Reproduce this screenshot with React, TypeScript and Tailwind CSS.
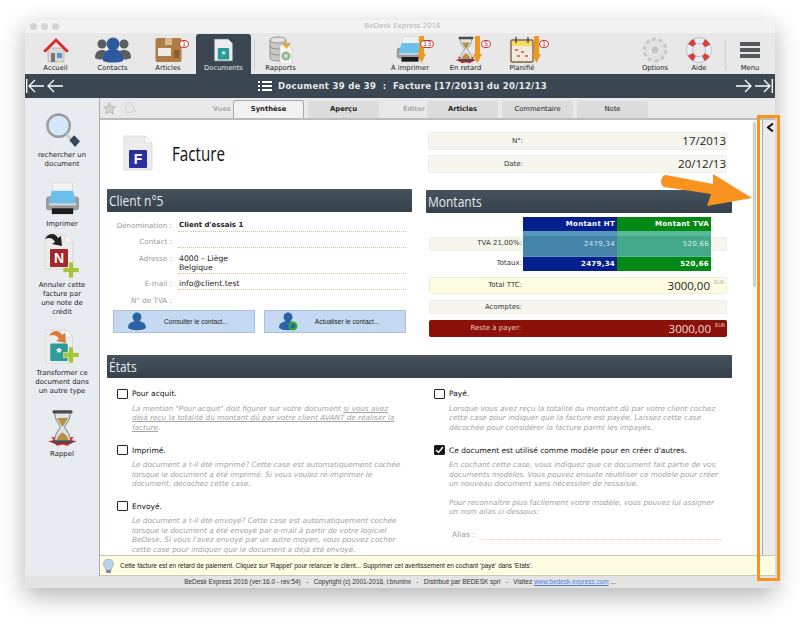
import React, { FC, ReactNode } from "react";

// --- small drawn icons ---

const Home = () => (
  <svg width="28" height="28" viewBox="0 0 28 28">
    <rect x="6" y="12" width="16" height="14" fill="#d8d8d4" stroke="#999" strokeWidth=".5" />
    <rect x="9" y="17" width="4" height="9" fill="#777" />
    <rect x="15" y="17" width="5" height="5" fill="#5b8fc7" />
    <path d="M1 15 14 2l13 13-2.500 1.500L14 6 3.500 16.500z" fill="#d92b2b" />
  </svg>
);

const Contacts = () => (
  <svg width="36" height="26" viewBox="0 0 36 26">
    <g fill="#5a5d62">
      <circle cx="7" cy="7" r="4.500" />
      <path d="M0 21c0-6 3-8 7-8s7 2 7 8c-4 2-10 2-14 0z" />
      <circle cx="29" cy="7" r="4.500" />
      <path d="M22 21c0-6 3-8 7-8s7 2 7 8c-4 2-10 2-14 0z" />
    </g>
    <g fill="#2d5a9e">
      <circle cx="18" cy="7" r="6.500" />
      <path d="M8 24c0-9 4-12 10-12s10 3 10 12c-5 2-15 2-20 0z" />
    </g>
  </svg>
);

const Box = () => (
  <svg width="27" height="26" viewBox="0 0 27 26">
    <rect x=".5" y="1" width="26" height="24" rx="2" fill="#b07c45" />
    <rect x="10" y="1" width="7" height="7" fill="#dcb98c" />
    <rect x="3" y="11" width="13" height="8" fill="#ecebe6" />
    <rect x="19" y="13" width="5" height="8" fill="#8a5f30" />
  </svg>
);

const Badge: FC<{ n: number; className: string }> = ({ n, className }) => (
  <span className={`absolute flex h-[8px] items-center justify-center rounded-[4px] border border-[#c33] bg-white px-[2px] text-[6.500px] leading-none text-[#b22] ${className}`}>
    {n}
  </span>
);

const DocSheet: FC<{ w: number; h: number; fill: string; letter: string }> = ({ w, h, fill, letter }) => (
  <svg width={w} height={h} viewBox="0 0 30 36">
    <path d="M1 1h21l7 7v27H1z" fill="#ececec" stroke="#cfcfcf" strokeWidth=".6" />
    <path d="M22 1v7h7z" fill="#fff" stroke="#c8c8c8" strokeWidth=".5" />
    <rect x="6" y="15" width="18" height="18" rx="1" fill={fill} />
    <text x="15" y="29" textAnchor="middle" fontSize="14" fill="#fff" fontFamily="Liberation Sans" fontWeight="700">{letter}</text>
  </svg>
);

const Database = () => (
  <svg width="24" height="28" viewBox="0 0 24 28">
    <g fill="#c9c9c5" stroke="#77787a" strokeWidth=".7">
      <path d="M1 4v18c0 4 16 4 16 0V4z" />
      <ellipse cx="9" cy="4" rx="8" ry="3" fill="#e4e4e2" />
      <path d="M1 10c0 4 16 4 16 0M1 16c0 4 16 4 16 0" fill="none" />
    </g>
    <path d="M11 9h8l4 4v15H11z" fill="#f5f5f2" stroke="#bbb" strokeWidth=".5" />
    <path d="M13 7h9l-4.500 6z" fill="#eba43c" />
    <circle cx="17" cy="20" r="4.500" fill="#8dbb8c" />
    <circle cx="17" cy="20" r="2" fill="#cfe0ce" />
  </svg>
);

const Printer: FC<{ w?: number }> = ({ w = 35 }) => (
  <svg width={w} height={w} viewBox="0 0 36 36">
    <rect x="8" y="1" width="20" height="14" fill="#f2f2f2" stroke="#ccc" strokeWidth=".5" />
    <rect x="1" y="15" width="34" height="14" rx="3" fill="#9a9c9f" />
    <path d="M7 9h22l3 13H4z" fill="#6cc0ec" />
    <path d="M4 22h28v2H4z" fill="#d8dadc" />
    <rect x="7" y="27" width="22" height="6" fill="#1d1d1f" />
  </svg>
);

const Hourglass: FC<{ w?: number; h?: number }> = ({ w = 28, h = 30 }) => (
  <svg width={w} height={h} viewBox="0 0 28 34">
    <path d="M1 29l5-1-2-3 5 1 5-2 5 2 5-1-2 3 5 1-6 2-2 2-5-1-5 1-2-2z" fill="#e81515" />
    <path d="M7 3h14c0 9-5 10-5 13 0 3 5 4 5 13H7c0-9 5-10 5-13 0-3-5-4-5-13z" fill="#dfe4e6" stroke="#8c9093" />
    <path d="M9 8h10l-5 8zM8.500 28c1-4 3.500-6 5.500-7 2 1 4.500 3 5.500 7z" fill="#b98e45" />
    <rect x="5" y="1" width="18" height="3" rx="1" fill="#4a4d50" />
    <rect x="5" y="28" width="18" height="3" rx="1" fill="#4a4d50" />
  </svg>
);

const DownArrow: FC<{ className: string }> = ({ className }) => (
  <svg className={`absolute ${className}`} width="9" height="27" viewBox="0 0 9 27">
    <path d="M2 0h5v18h2l-4.500 9L0 18h2z" fill="#ec9a21" />
  </svg>
);

const Calendar = () => (
  <svg width="24" height="26" viewBox="0 0 24 26">
    <rect x="1" y="3" width="22" height="22" rx="1" fill="#f1ebdc" stroke="#86604a" strokeWidth="1.400" />
    <rect x="2" y="4" width="20" height="5" fill="#f4dc5e" />
    <path d="M6 0v6M18 0v6" stroke="#333" strokeWidth="1.200" />
    <path d="M5 12h3v2H5zM11 14h3v2h-3zM7 18h3v2H7zM15 18h3v2h-3z" fill="#d77" />
  </svg>
);

const Gear = () => (
  <svg width="26" height="26" viewBox="0 0 26 26">
    <circle cx="13" cy="13" r="8.500" fill="none" stroke="#e2e2e2" strokeWidth="5" />
    <circle cx="13" cy="13" r="11" fill="none" stroke="#c8c8c8" strokeWidth="3" strokeDasharray="4 2.900" />
    <circle cx="13" cy="13" r="3.500" fill="#c4c4c4" />
  </svg>
);

const Buoy = () => (
  <svg width="26" height="26" viewBox="0 0 26 26">
    <circle cx="13" cy="13" r="9.500" fill="none" stroke="#9aa8b8" strokeWidth="6.200" />
    <circle cx="13" cy="13" r="9.500" fill="none" stroke="#e6eef8" strokeWidth="5.200" />
    <circle cx="13" cy="13" r="9.500" fill="none" stroke="#d8403a" strokeWidth="5.500" strokeDasharray="6 8.920" strokeDashoffset="3" transform="rotate(45 13 13)" />
  </svg>
);

const Menu = () => (
  <svg width="20" height="18" viewBox="0 0 20 18">
    <path d="M0 1h20v4H0zM0 7h20v4H0zM0 13h20v4H0z" fill="#55585c" />
  </svg>
);

const Magnifier = () => (
  <svg width="35" height="35" viewBox="0 0 36 36">
    <circle cx="14" cy="13" r="11.500" fill="#d3e9fa" stroke="#9a9c9f" strokeWidth="2.500" />
    <path d="M22 22l4 4" stroke="#ccc" strokeWidth="3" />
    <path d="M25 28l5-5 6 6-5 6z" fill="#37485e" />
  </svg>
);

const Plus: FC<{ className: string }> = ({ className }) => (
  <svg className={`absolute ${className}`} width="16" height="16" viewBox="0 0 16 16">
    <path d="M5.500 0h5v5.500H16v5h-5.500V16h-5v-5.500H0v-5h5.500z" fill="#a6c43d" stroke="#fff" strokeWidth=".5" />
  </svg>
);

const CurvedArrow: FC<{ color: string; className: string }> = ({ color, className }) => (
  <svg className={`absolute ${className}`} width="19" height="15" viewBox="0 0 19 15">
    <path d="M1 7C4 1 11 0 14 6l3-2 1 10-10-2 3-2C9 6 5 5 1 7z" fill={color} />
  </svg>
);

const Person: FC<{ refresh?: boolean }> = ({ refresh }) => (
  <svg width="20" height="19" viewBox="0 0 20 19">
    <circle cx="9" cy="5" r="4.500" fill="#2b62a3" />
    <path d="M0 16c0-5 4-7 9-7s9 2 9 7c-4 3-14 3-18 0z" fill="#2b62a3" />
    {refresh && <circle cx="14" cy="14" r="3.500" fill="none" stroke="#2fb02f" strokeWidth="2" />}
  </svg>
);

const Check: FC<{ checked?: boolean }> = ({ checked }) => (
  <span className={`flex h-[10px] w-[11px] shrink-0 items-center justify-center rounded-[1px] border border-[#222] ${checked ? "bg-[#111]" : "bg-white"}`}>
    {checked && (
      <svg width="9" height="8" viewBox="0 0 9 8">
        <path d="M1 4l2.500 2.500L8 1" fill="none" stroke="#fff" strokeWidth="1.400" />
      </svg>
    )}
  </span>
);

const ThinArrow: FC<{ dir: "left" | "right"; bar?: boolean }> = ({ dir, bar }) => (
  <svg width="18" height="14" viewBox="0 0 18 14" className={dir === "right" ? "-scale-x-100" : ""}>
    {bar && <path d="M.7 0v14" stroke="#fff" strokeWidth="1.400" />}
    <path d={`M${bar ? 3 : 1} 7h15M${bar ? 9 : 7} 1 ${bar ? 3 : 1} 7l6 6`} fill="none" stroke="#fff" strokeWidth="1.300" />
  </svg>
);

// --- toolbar ---

const ToolItem: FC<{ label: string; className: string; children: ReactNode; active?: boolean }> = ({ label, className, children, active }) => (
  <div className={`relative flex shrink-0 flex-col items-center justify-end ${className} ${active ? "h-[40px] rounded-t-[3px] bg-[#3a4652] text-[#e6e8ea]" : "h-[41px] text-[#222]"}`}>
    <div className="flex h-[29px] items-center justify-center">{children}</div>
    <span className="mb-[1px] whitespace-nowrap text-[6.800px] leading-[9px]">{label}</span>
  </div>
);

const Toolbar = () => (
  <div className="flex h-[41px] items-end bg-[#e8e8e8] pl-[2px]">
    <ToolItem label="Accueil" className="w-[57px]"><Home /></ToolItem>
    <ToolItem label="Contacts" className="w-[57px]"><Contacts /></ToolItem>
    <ToolItem label="Articles" className="w-[54px]">
      <Box />
      <Badge n={1} className="left-[38px] top-[7px]" />
    </ToolItem>
    <ToolItem label="Documents" className="ml-[1px] w-[55px]" active>
      <DocSheet w={19} h={24} fill="#2d9a99" letter="*" />
    </ToolItem>
    <div className="mb-[4px] ml-[3px] h-[30px] w-px bg-[#d0d0d0]" />
    <ToolItem label="Rapports" className="w-[51px]"><Database /></ToolItem>
    <ToolItem label="À imprimer" className="ml-[76px] w-[56px]">
      <Printer w={28} />
      <DownArrow className="left-[35px] top-[3px]" />
      <Badge n={13} className="left-[38px] top-[7px]" />
    </ToolItem>
    <ToolItem label="En retard" className="w-[55px]">
      <Hourglass w={24} h={28} />
      <DownArrow className="left-[35px] top-[3px]" />
      <Badge n={5} className="left-[43px] top-[7px]" />
    </ToolItem>
    <ToolItem label="Planifié" className="w-[58px]">
      <Calendar />
      <DownArrow className="left-[39px] top-[3px]" />
      <Badge n={1} className="left-[46px] top-[7px]" />
    </ToolItem>
    <ToolItem label="Options" className="ml-[82px] w-[44px]"><Gear /></ToolItem>
    <ToolItem label="Aide" className="w-[44px]"><Buoy /></ToolItem>
    <div className="mb-[4px] ml-[4px] h-[30px] w-px bg-[#d0d0d0]" />
    <ToolItem label="Menu" className="w-[48px]"><Menu /></ToolItem>
  </div>
);

const NavBar = () => (
  <div className="flex h-[24px] items-center justify-between bg-[#3a4652] pl-[1px] pr-[2px]">
    <div className="flex items-center gap-[3px]">
      <ThinArrow dir="left" bar />
      <ThinArrow dir="left" />
    </div>
    <div className="ml-[6px] flex items-center gap-[6px] text-[8.500px] font-bold tracking-[.3px] text-[#e6e8ea]">
      <svg width="14" height="10" viewBox="0 0 14 10">
        <path d="M0 0h2v2H0zM4 0h10v2H4zM0 4h2v2H0zM4 4h10v2H4zM0 8h2v2H0zM4 8h10v2H4z" fill="#fff" />
      </svg>
      <span className="whitespace-pre">Document 39 de 39  :  Facture [17/2013] du 20/12/13</span>
    </div>
    <div className="flex items-center gap-[3px]">
      <ThinArrow dir="right" />
      <ThinArrow dir="right" bar />
    </div>
  </div>
);

// --- sidebar ---

const SideItem: FC<{ label: ReactNode; children: ReactNode; className: string }> = ({ label, children, className }) => (
  <div className={`flex flex-col items-center text-center ${className}`}>
    {children}
    <span className="mt-[3px] whitespace-nowrap text-[6.900px] leading-[9px] text-[#222]">{label}</span>
  </div>
);

const Sidebar = () => (
  <div className="flex w-[75px] shrink-0 flex-col items-center border-r border-[#aaa] bg-[#e8ebf0]">
    <SideItem label={<>rechercher un<br />document</>} className="mt-[15px]"><Magnifier /></SideItem>
    <SideItem label="Imprimer" className="mt-[13px]"><Printer /></SideItem>
    <SideItem label={<>Annuler cette<br />facture par<br />une note de<br />crédit</>} className="mt-[3px]">
      <div className="relative h-[46px] w-[36px]">
        <DocSheet w={30} h={40} fill="#a5262c" letter="N" />
        <CurvedArrow color="#222" className="left-0 top-0" />
        <Plus className="left-[19px] top-[30px]" />
      </div>
    </SideItem>
    <SideItem label={<>Transformer ce<br />document dans<br />un autre type</>} className="mt-[12px]">
      <div className="relative h-[37px] w-[36px]">
        <DocSheet w={30} h={35} fill="#2d9a99" letter="*" />
        <CurvedArrow color="#e07a3a" className="left-[4px] top-0" />
        <Plus className="left-[19px] top-[18px]" />
      </div>
    </SideItem>
    <SideItem label="Rappel" className="mt-[13px]"><Hourglass w={31} h={38} /></SideItem>
  </div>
);

// --- tabs ---

const tabs = [
  { label: "Vues", kind: "text", cls: "ml-[76px] w-[18px]" },
  { label: "Synthèse", kind: "active", cls: "ml-[2px] font-bold" },
  { label: "Aperçu", kind: "tab", cls: "ml-[4px] font-bold" },
  { label: "Éditer", kind: "text", cls: "ml-[24px] w-[22px]" },
  { label: "Articles", kind: "tab", cls: "ml-[2px] font-bold" },
  { label: "Commentaire", kind: "tab", cls: "ml-[4px]" },
  { label: "Note", kind: "tab", cls: "ml-[4px]" },
];

const TabStrip = () => (
  <div className="flex h-[22px] items-end border-b-2 border-[#bcbcbc] bg-[#e9e9e9] pl-[3px]">
    <div className="mb-[3px] flex items-center gap-[8px]">
      <svg width="13" height="13" viewBox="0 0 24 24">
        <path d="M12 1l3.400 7 7.600 1-5.500 5.300L18.800 22 12 18.300 5.200 22l1.300-7.700L1 9l7.600-1z" fill="#d4d4d0" stroke="#999" />
      </svg>
      <svg width="13" height="14" viewBox="0 0 24 24">
        <path d="M10 2c5 0 6 5 7 9s5 7 5 7l-17 3s0-4-2-8 0-11 7-11z" fill="#e8e8e4" stroke="#bbb" />
      </svg>
    </div>
    {tabs.map((t) =>
      t.kind === "text" ? (
        <span key={t.label} className={`mb-[4px] shrink-0 text-[6.500px] font-bold leading-[9px] text-[#aaa] ${t.cls}`}>{t.label}</span>
      ) : (
        <span
          key={t.label}
          className={`flex w-[71px] shrink-0 items-center justify-center rounded-t-[3px] text-[6.800px] ${t.cls} ${
            t.kind === "active" ? "h-[18px] border border-b-0 border-[#aaa] bg-[#f2f2f2] text-[#222]" : "h-[17px] bg-[#dcdcdc] text-[#222]"
          }`}
        >
          {t.label}
        </span>
      )
    )}
  </div>
);

// --- content ---

const SectionHead: FC<{ title: string }> = ({ title }) => (
  <div className="flex h-[23px] items-center rounded-[1px] bg-gradient-to-b from-[#46525e] to-[#35404b] pl-[2px] font-['Open_Sans',sans-serif] text-[15px] text-[#e8eaec]">
    <span className="block origin-left scale-x-[.8]">{title}</span>
  </div>
);

const Field: FC<{ label: string; children?: ReactNode; bold?: boolean; noLine?: boolean; className: string }> = ({ label, children, bold, noLine, className }) => (
  <div className={`flex text-[7.700px] leading-[9px] ${className}`}>
    <span className="mr-[6px] w-[65px] shrink-0 text-right text-[7.200px] text-[#999]">{label} :</span>
    <div className={`min-h-[11px] w-[228px] pb-[1px] pl-[1px] text-[#222] ${noLine ? "" : "border-b border-dotted border-[#f0b98c]"} ${bold ? "text-[7px] font-bold" : ""}`}>
      {children}
    </div>
  </div>
);

const ContactButton: FC<{ label: string; refresh?: boolean }> = ({ label, refresh }) => (
  <div className="flex h-[23px] w-[142px] items-center border border-[#a8c0dc] bg-[#c5d9f2] pl-[14px] font-['Liberation_Sans',sans-serif] text-[6.600px] text-[#222]">
    <Person refresh={refresh} />
    <span className="flex-1 pr-[10px] text-center">{label}</span>
  </div>
);

const valueFont = "font-['Open_Sans',sans-serif] text-[11.500px]";

const MetaRow: FC<{ label: string; value: string; className?: string }> = ({ label, value, className = "" }) => (
  <div className={`flex h-[18px] items-center rounded-[2px] border border-[#efefe8] bg-[#f6f6ef] ${className}`}>
    <span className="w-[94px] text-right text-[7px] text-[#333]">{label}</span>
    <span className={`flex-1 text-right text-[#222] ${valueFont}`}>{value}</span>
  </div>
);

const amountCell = "relative flex flex-1 items-center justify-end pr-[2px] text-[7px] text-white";

const Montants = () => (
  <div className="ml-[3px] w-[298px]">
    <div className="relative mt-[4px] flex h-[54px]">
      {/* pale row running behind the table */}
      <div className="absolute inset-x-0 top-[20px] h-[14px] rounded-[2px] border border-[#efefe8] bg-[#f6f6ef]" />
      <div className="relative flex w-[94px] flex-col items-end pr-px text-[7px] leading-[9px] text-[#333]">
        <span className="mt-[22px] block">TVA 21,00%:</span>
        <span className="mt-[11px] block">Totaux:</span>
      </div>
      <div className="relative flex w-[188px] flex-col font-bold tracking-[.3px]">
        <div className="flex h-[14px]">
          <div className={`${amountCell} bg-[#051f8c]`}>Montant HT</div>
          <div className={`${amountCell} bg-[#038a15]`}>Montant TVA</div>
        </div>
        <div className="flex h-[26px] font-normal">
          <div className={`${amountCell} bg-[#5499bd] !text-[#d8e6ee]`}>
            <span className="absolute inset-x-0 top-[5px] h-[20px] bg-[#4484a8]" />
            <span className="relative">2479,34</span>
          </div>
          <div className={`${amountCell} bg-[#56b997] !text-[#d8eee6]`}>
            <span className="absolute inset-x-0 top-[5px] h-[20px] bg-[#45a88a]" />
            <span className="relative">520,66</span>
          </div>
        </div>
        <div className="flex h-[14px]">
          <div className={`${amountCell} bg-[#051f8c]`}>2479,34</div>
          <div className={`${amountCell} bg-[#038a15]`}>520,66</div>
        </div>
      </div>
    </div>
    <div className="mt-[6px] flex h-[17px] items-center rounded-[2px] border border-[#efefd8] bg-[#fdfce2]">
      <span className="w-[92px] text-right text-[7px] text-[#333]">Total TTC:</span>
      <span className={`flex-1 text-right text-[#222] ${valueFont}`}>3000,00</span>
      <span className="mb-[5px] ml-[4px] mr-[1px] w-[11px] text-[5px] text-[#aaa]">EUR</span>
    </div>
    <div className="mt-[6px] flex h-[14px] items-center rounded-[2px] border border-[#eeeee6] bg-[#f6f6ef]">
      <span className="w-[92px] text-right text-[7px] text-[#333]">Acomptes:</span>
    </div>
    <div className="mt-[6px] flex h-[17px] items-center rounded-[2px] bg-[#8a1008]">
      <span className="w-[92px] text-right text-[7px] text-[#e8c8c4]">Reste à payer:</span>
      <span className={`flex-1 text-right text-[#f2dedc] ${valueFont}`}>3000,00</span>
      <span className="mb-[5px] ml-[4px] mr-[1px] w-[11px] text-[5px] text-[#f0d0cc]">EUR</span>
    </div>
  </div>
);

const State: FC<{ title: string; checked?: boolean; className?: string; children: ReactNode }> = ({ title, checked, className = "", children }) => (
  <div className={className}>
    <div className="flex h-[10px] items-center gap-[4px] text-[7.500px] text-[#111]">
      <Check checked={checked} />
      <span>{title}</span>
    </div>
    <div className="ml-[15px] mt-[5px] text-[7.300px] italic leading-[9.400px] text-[#a3a3a3]">{children}</div>
  </div>
);

const Content = () => (
  <div className="relative min-h-0 flex-1 overflow-hidden bg-white pl-[7px]">
    {/* scrollbar */}
    <div className="absolute right-0 top-0 h-full w-[5px] bg-[#f7f7f7]">
      <div className="ml-auto mr-px mt-[2px] h-[165px] w-[3px] rounded-full bg-[#cfcfcf]" />
    </div>

    <div className="flex">
      <div className="w-[305px]">
        <div className="flex h-[69px] items-start pl-[16px] pt-[15px]">
          <DocSheet w={30} h={36} fill="#2c2f9e" letter="F" />
          <span className="ml-[19px] mt-[7px] block origin-left scale-x-[.76] font-['Open_Sans',sans-serif] text-[20px] leading-[24px] text-[#111]">Facture</span>
        </div>
        <SectionHead title="Client n°5" />
        <Field label="Dénomination" bold className="mt-[9px]">Client d'essais 1</Field>
        <Field label="Contact" className="mt-[5px]" />
        <Field label="Adresse" className="mt-[6px]">4000 – Liège<br />Belgique</Field>
        <Field label="E-mail" className="mt-[5px]">info@client.test</Field>
        <Field label="N° de TVA" noLine className="mt-[6px]" />
        <div className="ml-[6px] mt-[3px] flex gap-[9px]">
          <ContactButton label="Consulter le contact..." />
          <ContactButton label="Actualiser le contact..." refresh />
        </div>
      </div>

      <div className="ml-[14px] w-[306px]">
        <div className="ml-[2px] w-[299px] pt-[12px]">
          <MetaRow label="N°:" value="17/2013" />
          <MetaRow label="Date:" value="20/12/13" className="mt-[5px]" />
        </div>
        <div className="mt-[17px]"><SectionHead title="Montants" /></div>
        <Montants />
      </div>
    </div>

    <div className="mt-[18px] w-[625px]"><SectionHead title="États" /></div>

    <div className="mt-[11px] flex">
      <div className="ml-[10px] w-[310px]">
        <State title="Pour acquit.">
          La mention "Pour acquit" doit figurer sur votre document <span className="underline">si vous avez<br />déjà reçu la totalité du montant dû par votre client AVANT de réaliser la<br />facture</span>.
        </State>
        <State title="Imprimé." className="mt-[13px]">
          Le document a t-il été imprimé? Cette case est automatiquement cochée<br />lorsque le document a été imprimé. Si vous voulez ré-imprimer le<br />document, décochez cette case.
        </State>
        <State title="Envoyé." className="mt-[13px]">
          Le document a t-il été envoyé? Cette case est automatiquement cochée<br />lorsque le document a été envoyé par e-mail à partir de votre logiciel<br />BeDesk. Si vous l'avez envoyé par un autre moyen, vous pouvez cocher<br />cette case pour indiquer que le document a déjà été envoyé.
        </State>
      </div>
      <div className="ml-[7px] w-[300px]">
        <State title="Payé.">
          Lorsque vous avez reçu la totalité du montant dû par votre client cochez<br />cette case pour indiquer que la facture est payée. Laissez cette case<br />décochée pour considérer la facture parmi les impayés.
        </State>
        <State title="Ce document est utilisé comme modèle pour en créer d'autres." checked className="mt-[13px]">
          En cochant cette case, vous indiquez que ce document fait partie de vos<br />documents modèles. Vous pouvez ensuite réutiliser ce modèle pour créer<br />un nouveau document sans nécessiter de ressaisie.<br /><br />Pour reconnaître plus facilement votre modèle, vous pouvez lui assigner<br />un nom alias ci-dessous:
        </State>
        <div className="ml-[18px] mt-[12px] flex items-end text-[7.500px] text-[#999]">
          <span className="mr-[6px]">Alias :</span>
          <div className="w-[240px] border-b border-dotted border-[#f5cfa8]" />
        </div>
      </div>
    </div>
  </div>
);

const NoticeBar = () => (
  <div className="flex h-[21px] items-center border-y border-[#c8c8b8] bg-[#fefce2] pl-[3px] font-['Liberation_Sans',sans-serif] text-[6.450px] text-[#222]">
    <svg width="11" height="14" viewBox="0 0 11 14">
      <path d="M5.500 0a5 5 0 0 1 3 9v2h-6V9a5 5 0 0 1 3-9z" fill="#b8d4ee" stroke="#8aa4bc" strokeWidth=".6" />
      <rect x="3" y="11" width="5" height="3" rx="1" fill="#888" />
    </svg>
    <span className="ml-[6px] whitespace-nowrap">Cette facture est en retard de paiement. Cliquez sur 'Rappel' pour relancer le client... Supprimer cet avertissement en cochant 'payé' dans 'Etats'.</span>
  </div>
);

const App: FC = () => (
  <div className="relative h-[618px] w-[800px] overflow-hidden bg-white font-['DejaVu_Sans',sans-serif]">
    <div className="ml-[25px] pt-[20px]">
      <div className="flex h-[568px] w-[750px] flex-col rounded-t-[4px] shadow-[0_8px_24px_rgba(0,0,0,.3)]">
        <div className="flex h-[13px] shrink-0 items-center rounded-t-[4px] bg-[#f3f3f3] pl-[5px]">
          <div className="flex gap-[4px]">
            <span className="h-[7px] w-[7px] rounded-full bg-[#d4d4d4]" />
            <span className="h-[7px] w-[7px] rounded-full bg-[#d4d4d4]" />
            <span className="h-[7px] w-[7px] rounded-full bg-[#d4d4d4]" />
          </div>
          <span className="mr-[29px] flex-1 text-center text-[7px] text-[#b5b5b5]">BeDesk Express 2016</span>
        </div>
        <Toolbar />
        <NavBar />
        <div className="flex min-h-0 flex-1">
          <Sidebar />
          <div className="flex min-w-0 flex-1 flex-col">
            <TabStrip />
            <div className="flex min-h-0 flex-1">
              <Content />
              <div className="w-[18px] shrink-0 border-l-[5px] border-[#f7f7f7] bg-[#ececec]">
                <div className="h-full border-l border-[#a8a8a8] pl-[3px] pt-[3px]">
                  <svg width="8" height="9" viewBox="0 0 8 9">
                    <path d="M7 .5 2 4.500 7 8.500" fill="none" stroke="#111" strokeWidth="2" />
                  </svg>
                </div>
              </div>
            </div>
            <NoticeBar />
          </div>
        </div>
        <div className="flex h-[12px] shrink-0 items-center justify-center bg-[#e4e4e4] font-['Liberation_Sans',sans-serif] text-[6.450px] text-[#333]">
          <span className="whitespace-pre">BeDesk Express 2016 (ver:16.0 - rev:54)   -   Copyright (c) 2001-2016, l.bruninx   -   Distribué par BEDESK sprl   -   Visitez <span className="text-[#4a7fe0] underline">www.bedesk-express.com</span> ...</span>
        </div>
      </div>
    </div>

    {/* annotation drawn over the screenshot */}
    <div className="absolute left-[757px] top-[115px] h-[466px] w-[23px] border-[3px] border-[#f7931e]" />
    <svg className="absolute left-[660px] top-[172px]" width="95" height="36" viewBox="0 0 95 36">
      <path d="M6 3 53 12 53 2 92 26 47 34 51 22 4 15C-1 13 1 3 6 3z" fill="#f7931e" />
    </svg>
  </div>
);

export default App;
